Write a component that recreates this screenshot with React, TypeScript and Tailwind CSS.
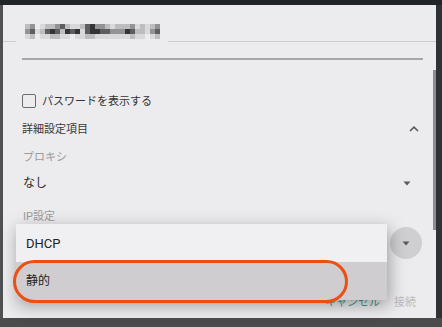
const mosaicRows = [
  "230122342112453321222312123",
  "341245425451455443335422134",
  "120112211011221111111211012",
];

const shade: Record<string, string> = {
  "0": "bg-[#ecebed]",
  "1": "bg-[#d9d8da]",
  "2": "bg-[#bdbcbe]",
  "3": "bg-[#939294]",
  "4": "bg-[#5e5d5f]",
  "5": "bg-[#343335]",
};

function Mosaic() {
  return (
    <div className="flex flex-col">
      {mosaicRows.map((row, i) => (
        <div key={i} className="flex">
          {row.split("").map((c, j) => (
            <div key={j} className={`w-[5px] h-[5px] ${shade[c]}`} />
          ))}
        </div>
      ))}
    </div>
  );
}

function Caret() {
  return (
    <svg width="8" height="5" viewBox="0 0 8 5">
      <path d="M0.5 0.5h7L4 4.5z" fill="#5a5a5a" />
    </svg>
  );
}

export default function App() {
  return (
    <div className="w-[442px] h-[327px] bg-[#4b4b4b] overflow-hidden font-['Roboto','Noto_Sans_CJK_JP',sans-serif]">
      <div className="h-[5px] bg-[#212528]" />
      <div className="flex h-[313px]">
        <div className="w-[3px] bg-[#4e5052]" />
        <div className="relative w-[433px] bg-[#ecebed] flex flex-col">
          {/* network name (blurred) */}
          <div className="flex items-end h-[37px]">
            <div className="w-[13px] h-px bg-[#cdcccf]" />
            <div className="w-[152px] h-[37px] pt-[19px] pl-[9px]">
              <Mosaic />
            </div>
            <div className="flex-1 h-px bg-[#cdcccf]" />
          </div>

          <div className="mt-[16px] ml-[19px] mr-[13px] h-[2px] bg-[#a6a5a8]" />

          <div className="mt-[31px] ml-[19px] h-[20px] flex items-center gap-[6px]">
            <div className="w-[14px] h-[14px] border-[1.5px] border-[#6b6a6d] rounded-[2px]" />
            <span className="text-[11px] text-[#333] leading-none">パスワードを表示する</span>
          </div>

          <div className="mt-[8px] ml-[19px] mr-[17px] h-[20px] flex items-center justify-between">
            <span className="text-[11px] text-[#3a3a3a] leading-none">詳細設定項目</span>
            <svg width="10" height="6" viewBox="0 0 10 6">
              <path d="M1 5L5 1.2L9 5" fill="none" stroke="#5a5a5a" strokeWidth="1.6" />
            </svg>
          </div>

          <div className="mt-[10px] ml-[20px] h-[16px] flex items-center">
            <span className="text-[11px] text-[#9b9a9d] leading-none">プロキシ</span>
          </div>

          <div className="mt-[8px] ml-[20px] mr-[25px] h-[20px] flex items-center justify-between">
            <span className="text-[12px] text-[#2a2a2a] leading-none">なし</span>
            <Caret />
          </div>

          <div className="mt-[15px] ml-[20px] h-[16px] flex items-center">
            <span className="text-[11px] text-[#9b9a9d] leading-none">IP設定</span>
          </div>

          {/* dialog buttons, mostly covered by the dropdown */}
          <div className="mt-[70px] mr-[20px] h-[16px] flex items-center justify-end gap-[14px]">
            <span className="text-[11px] text-[#3d9a90] leading-none">キャンセル</span>
            <span className="text-[11px] text-[#bdbcbe] leading-none">接続</span>
          </div>

          {/* scrollbar */}
          <div className="absolute right-0 top-[65px] w-[3px] h-[160px] bg-[#8d8c8f]" />

          {/* dropdown spinner button */}
          <div className="absolute left-[387px] top-[222px] w-[32px] h-[32px] rounded-full bg-[#cfced0] flex items-center justify-center">
            <Caret />
          </div>

          {/* open dropdown menu */}
          <div className="absolute left-[13px] top-[219px] w-[371px] flex flex-col shadow-[2px_5px_16px_rgba(0,0,0,0.35)]">
            <div className="h-[38px] bg-[#f0eff1] flex items-center pl-[10px]">
              <span className="text-[13px] text-[#222] leading-none">DHCP</span>
            </div>
            <div className="h-[38px] bg-[#cfcdd0] flex items-center pl-[10px]">
              <span className="text-[12px] text-[#222] leading-none">静的</span>
            </div>
          </div>

          {/* highlight */}
          <div className="absolute left-[10px] top-[255px] w-[335px] h-[43px] border-[3px] border-[#ec4f12] rounded-[22px]" />
        </div>
        <div className="flex-1 bg-[#2f3234]" />
      </div>
    </div>
  );
}
